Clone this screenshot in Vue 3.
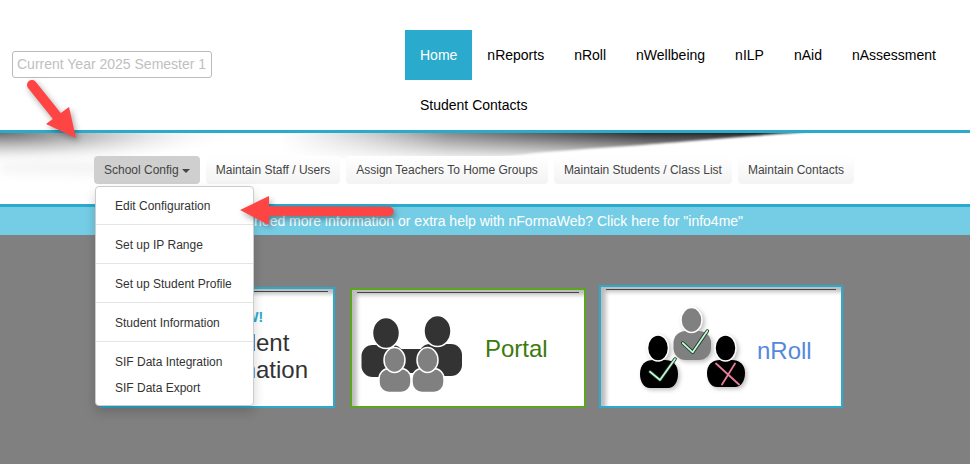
<template>
  <div class="page">
    <header class="top">
      <div class="year-box">Current Year 2025 Semester 1</div>
      <nav class="main-nav">
        <a v-for="item in mainNav" :key="item" class="main-link" :class="{ active: item === 'Home' }">{{ item }}</a>
      </nav>
    </header>

    <section class="banner">
      <!-- swoosh artwork behind the buttons -->
      <svg class="swoosh" viewBox="0 0 970 71" width="970" height="71" aria-hidden="true">
        <defs>
          <radialGradient id="leftGlow" cx="0.5" cy="0.5" r="0.5">
            <stop offset="0" stop-color="#6f6f6f" />
            <stop offset="0.25" stop-color="#9a9a9a" stop-opacity="0.9" />
            <stop offset="0.6" stop-color="#d8d8d8" stop-opacity="0.7" />
            <stop offset="1" stop-color="#fff" stop-opacity="0" />
          </radialGradient>
          <linearGradient id="wedgeX" x1="280" x2="835" y1="0" y2="0" gradientUnits="userSpaceOnUse">
            <stop offset="0" stop-color="#bbb" stop-opacity="0" />
            <stop offset="0.3" stop-color="#8c8c8c" />
            <stop offset="0.66" stop-color="#2c2c2c" />
            <stop offset="0.92" stop-color="#222" />
            <stop offset="1" stop-color="#555" stop-opacity="0.2" />
          </linearGradient>
          <linearGradient id="wedgeFade" x1="0" x2="0" y1="0" y2="28" gradientUnits="userSpaceOnUse">
            <stop offset="0" stop-color="#fff" />
            <stop offset="0.35" stop-color="#fff" stop-opacity="0.65" />
            <stop offset="1" stop-color="#fff" stop-opacity="0" />
          </linearGradient>
          <mask id="wedgeMask">
            <rect width="970" height="71" fill="url(#wedgeFade)" />
          </mask>
        </defs>
        <ellipse cx="0" cy="0" rx="240" ry="33" fill="url(#leftGlow)" />
        <path class="soft" d="M0 30 C60 22 120 26 190 44 C130 44 60 42 0 40 Z" fill="#f5f5f5" />
        <g mask="url(#wedgeMask)">
          <path class="wedge" d="M280 -3 H835 C760 2 680 9 630 13 C590 16 550 18 520 22 C480 27 420 30 280 30 Z" fill="url(#wedgeX)" />
        </g>
      </svg>

      <div class="sub-nav">
        <div class="dropdown">
          <button class="sub-btn open">School Config<span class="caret"></span></button>
          <ul class="menu">
            <template v-for="(entry, i) in menuItems" :key="i">
              <li v-if="entry === '-'" class="divider"></li>
              <li v-else class="menu-item">{{ entry }}</li>
            </template>
          </ul>
        </div>
        <button v-for="label in subNav" :key="label" class="sub-btn">{{ label }}</button>
      </div>
    </section>

    <div class="info-bar">If you need more information or extra help with nFormaWeb? Click here for "info4me"</div>

    <main class="cards">
      <div class="card card-info">
        <div class="info-text">
          <div class="new-tag">NEW!</div>
          <div class="info-title">Student<br />Information</div>
        </div>
      </div>

      <div class="card card-portal">
        <svg class="portal-icon" viewBox="360 316 106 82" width="106" height="82" aria-hidden="true">
          <g fill="#333">
            <rect x="361.5" y="347" width="42" height="32" rx="11" />
            <rect x="419" y="346" width="43" height="32" rx="11" />
            <rect x="395" y="351" width="30" height="24" />
            <ellipse cx="386" cy="335" rx="13.5" ry="15.5" stroke="#fff" stroke-width="1.5" />
            <ellipse cx="437.5" cy="333" rx="13.5" ry="15.5" stroke="#fff" stroke-width="1.5" />
          </g>
          <g fill="#808080" stroke="#fff" stroke-width="1.5">
            <rect x="379" y="370.5" width="32" height="24" rx="10" />
            <rect x="412" y="370.5" width="32" height="24" rx="10" />
            <ellipse cx="394.5" cy="362" rx="10.5" ry="12.5" />
            <ellipse cx="427.5" cy="362" rx="10.5" ry="12.5" />
          </g>
        </svg>
        <span class="portal-label">Portal</span>
      </div>

      <div class="card card-roll">
        <svg class="roll-icon" viewBox="638 304 112 90" width="112" height="90" aria-hidden="true">
          <g class="person">
            <rect x="673.5" y="331" width="37.5" height="29" rx="12" fill="#808080" />
            <ellipse cx="691.5" cy="320" rx="10.5" ry="12.5" fill="#808080" stroke="#fff" stroke-width="1.5" />
          </g>
          <g class="person">
            <path d="M640 374 C640 364 646 360 653 360 H665 C672 360 678 364 678 374 C678 382 674 388 668 388 H650 C644 388 640 382 640 374 Z" />
            <ellipse cx="658" cy="348" rx="10.5" ry="13" stroke="#fff" stroke-width="1.5" />
          </g>
          <g class="person">
            <path d="M707 373 C707 364 713 360 720 360 H732 C739 360 745 364 745 373 C745 381 741 387 735 387 H717 C711 387 707 381 707 373 Z" />
            <ellipse cx="725.5" cy="348" rx="10.5" ry="13" stroke="#fff" stroke-width="1.5" />
          </g>
          <g fill="none" stroke-linecap="round" stroke-linejoin="round">
            <polyline class="tick-edge" points="682.7,343 692.7,352.3 707.3,331" />
            <polyline class="tick" points="682.7,343 692.7,352.3 707.3,331" />
            <polyline class="tick-edge" points="650,371.7 660,380 675,359" />
            <polyline class="tick" points="650,371.7 660,380 675,359" />
            <path class="cross" d="M716 363.5 L739 384.5 M735 363.5 L722 384.5" />
          </g>
        </svg>
        <span class="roll-label">nRoll</span>
      </div>
    </main>

    <!-- red annotation arrows drawn over the screenshot -->
    <svg class="arrows" viewBox="0 0 970 464" width="970" height="464" aria-hidden="true">
      <g class="arrow-group">
        <path d="M32 85 L60 120" stroke="#ff4444" stroke-width="10" stroke-linecap="round" fill="none" />
        <polygon points="76,138 46,124 69,107" fill="#ff4444" />
        <path d="M262 211 L389 211.5" stroke="#ff4444" stroke-width="9.5" stroke-linecap="round" fill="none" />
        <polygon points="240,210 269,196 269,225" fill="#ff4444" />
      </g>
    </svg>
  </div>
</template>

<script setup>
const mainNav = ['Home', 'nReports', 'nRoll', 'nWellbeing', 'nILP', 'nAid', 'nAssessment', 'Student Contacts']
const subNav = ['Maintain Staff / Users', 'Assign Teachers To Home Groups', 'Maintain Students / Class List', 'Maintain Contacts']
const menuItems = [
  'Edit Configuration', '-',
  'Set up IP Range', '-',
  'Set up Student Profile', '-',
  'Student Information', '-',
  'SIF Data Integration',
  'SIF Data Export'
]
</script>

<style>
html, body {
  background: #808080;
}
</style>

<style scoped>
.page {
  position: relative;
  width: 970px;
  height: 464px;
  overflow: hidden;
  background: #808080;
  font-family: "Liberation Sans", Arial, sans-serif;
}

.top {
  display: flex;
  align-items: flex-start;
  height: 130px;
  background: #fff;
  border-bottom: 3px solid #2aabcd;
}

.year-box {
  box-sizing: border-box;
  width: 200px;
  height: 27px;
  margin: 51px 0 0 12px;
  padding: 0 4px;
  border: 1px solid #bbb;
  border-radius: 3px;
  color: #c0c0c0;
  font-size: 14px;
  line-height: 25px;
  white-space: nowrap;
}

.main-nav {
  display: flex;
  flex-wrap: wrap;
  width: 565px;
  margin: 30px 0 0 193px;
}

.main-link {
  padding: 0 15px;
  color: #000;
  font-size: 14px;
  line-height: 50px;
}

.main-link.active {
  background: #2aabcd;
  color: #fff;
}

.banner {
  position: relative;
  box-sizing: border-box;
  height: 71px;
  padding-top: 23px;
  background: #fff;
}

.swoosh {
  position: absolute;
  top: 0;
  left: 0;
}

.soft {
  filter: blur(5px);
}

.wedge {
  filter: blur(1px);
}

.sub-nav {
  position: relative;
  display: flex;
  gap: 6px;
  padding-left: 94px;
}

.dropdown {
  position: relative;
  z-index: 5;
}

.sub-btn {
  display: block;
  height: 28px;
  padding: 0 10px;
  border: 0;
  border-radius: 4px;
  background: linear-gradient(#fff, #f3f3f3);
  color: #444;
  font-family: inherit;
  font-size: 12px;
  white-space: nowrap;
}

.sub-btn.open {
  background: #cfcfcf;
}

.caret {
  display: inline-block;
  margin-left: 3px;
  vertical-align: middle;
  border-top: 4px solid #444;
  border-left: 4px solid transparent;
  border-right: 4px solid transparent;
}

.menu {
  position: absolute;
  top: 30px;
  left: 1px;
  box-sizing: border-box;
  width: 159px;
  margin: 0;
  padding: 6px 0 4px;
  list-style: none;
  background: #fff;
  border: 1px solid #ccc;
  border-radius: 4px;
  box-shadow: 0 6px 12px rgba(0, 0, 0, 0.175);
}

.menu-item {
  padding: 0 19px;
  color: #333;
  font-size: 12px;
  line-height: 26px;
  white-space: nowrap;
}

.divider {
  height: 1px;
  margin: 5px 0 7px;
  background: #e5e5e5;
}

.info-bar {
  box-sizing: border-box;
  height: 31px;
  padding-right: 11px;
  border-top: 3px solid #2aabcd;
  background: #75cde5;
  color: #fff;
  font-size: 14px;
  line-height: 28px;
  text-align: center;
}

.cards {
  display: flex;
  align-items: flex-end;
  box-sizing: border-box;
  height: 173px;
  padding-left: 100px;
}

.card {
  position: relative;
  display: flex;
  box-sizing: border-box;
  height: 120px;
  border: 2px solid #2aabcd;
  background: #fff;
  box-shadow: inset 6px 6px 4px -1px #bdbdbd;
}

/* dark rule along the top of each tile */
.card::before {
  content: "";
  position: absolute;
  top: 2px;
  left: 5px;
  right: 5px;
  height: 1px;
  background: #444;
}

.card-info {
  width: 235px;
  height: 121px;
  justify-content: flex-end;
  padding-right: 10px;
}

.info-text {
  width: 150px;
  padding-top: 20px;
  text-align: center;
}

.new-tag {
  margin-right: 7px;
  margin-bottom: 4px;
  color: #2aabcd;
  font-size: 14px;
  font-weight: bold;
  line-height: 16px;
}

.info-title {
  color: #333;
  font-size: 24px;
  line-height: 27px;
}

.card-portal {
  width: 236px;
  margin-left: 15px;
  align-items: center;
  padding-left: 8px;
  border-color: #5ba51f;
}

.portal-icon {
  align-self: flex-end;
  margin-bottom: 10px;
}

.portal-label {
  margin: 2px 0 0 19px;
  color: #3c7a0c;
  font-size: 24px;
}

.card-roll {
  width: 244px;
  height: 123px;
  margin-left: 13px;
  align-items: center;
  padding-left: 37px;
}

.roll-icon {
  align-self: flex-end;
  margin-bottom: 12px;
}

.person {
  filter: drop-shadow(2px 2px 2px rgba(0, 0, 0, 0.25));
}

.tick-edge {
  stroke: #17352a;
  stroke-width: 3.5;
}

.tick {
  stroke: #c6f7d4;
  stroke-width: 1.8;
}

.cross {
  stroke: #e87f96;
  stroke-width: 1.8;
}

.roll-label {
  margin: 9px 0 0 7px;
  color: #5588dd;
  font-size: 24px;
}

.arrows {
  position: absolute;
  top: 0;
  left: 0;
  z-index: 10;
  pointer-events: none;
}

.arrow-group {
  filter: drop-shadow(2px 3px 3px rgba(0, 0, 0, 0.35));
}
</style>
